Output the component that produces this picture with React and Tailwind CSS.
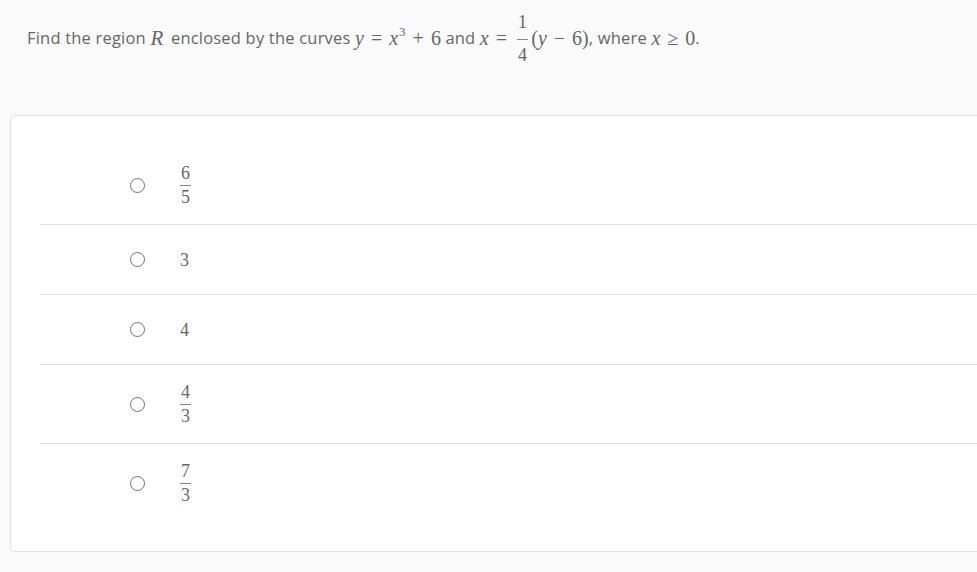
import React from 'react'

function Frac({ num, den, q }) {
  return (
    <span
      className={
        q
          ? "inline-flex flex-col items-center leading-none px-[3px] font-['Liberation_Serif','DejaVu_Serif',serif] text-[18px]"
          : "inline-flex flex-col items-center leading-none font-['Liberation_Serif','DejaVu_Serif',serif] text-[18px]"
      }
    >
      <span className={q ? 'px-[1px] pb-[8px]' : 'px-[1px] pb-[3px]'}>{num}</span>
      <span className="block h-px w-full bg-[#888]" />
      <span className={q ? 'px-[1px] pt-[6px]' : 'px-[1px] pt-[2px]'}>{den}</span>
    </span>
  )
}

function Op({ children }) {
  return <span className="px-[7px]">{children}</span>
}

function Radio() {
  return <span className="block w-[15px] h-[15px] rounded-full border-[1.5px] border-[#707070] bg-white shrink-0" />
}

const options = [
  { frac: ['6', '5'] },
  { text: '3' },
  { text: '4' },
  { frac: ['4', '3'] },
  { frac: ['7', '3'] },
]

export default function App() {
  return (
    <div className="w-[977px] h-[572px] overflow-hidden bg-[#fafafa] text-[#666] font-['Open_Sans','Lato',sans-serif]">
      <div className="h-[115px] pt-[12px] pl-[27px]">
        <div className="flex items-center h-[52px] whitespace-pre text-[16.5px] tracking-[0.2px]">
          <span>Find the region </span>
          <i className="font-['Liberation_Serif','DejaVu_Serif',serif] text-[21px] leading-none pr-[3px]">R</i>
          <span> enclosed by the curves </span>
          <span className="flex items-center font-['Liberation_Serif','DejaVu_Serif',serif] text-[20px] leading-none tracking-normal">
            <i>y</i>
            <Op>=</Op>
            <i>x</i>
            <sup className="text-[13px] pl-[1px]">3</sup>
            <Op>+</Op>
            <span>6</span>
          </span>
          <span> and </span>
          <span className="flex items-center font-['Liberation_Serif','DejaVu_Serif',serif] text-[20px] leading-none tracking-normal">
            <i>x</i>
            <Op>=</Op>
          </span>
          <Frac num="1" den="4" q />
          <span className="flex items-center font-['Liberation_Serif','DejaVu_Serif',serif] text-[20px] leading-none tracking-normal">
            <span>(</span>
            <i>y</i>
            <Op>−</Op>
            <span>6)</span>
          </span>
          <span>, where </span>
          <span className="flex items-center font-['Liberation_Serif','DejaVu_Serif',serif] text-[20px] leading-none tracking-normal">
            <i>x</i>
            <Op>≥</Op>
            <span>0</span>
          </span>
          <span>.</span>
        </div>
      </div>
      <div className="ml-[10px] w-[1000px] h-[437px] bg-white border border-[#e3e3e3] rounded-[4px] pt-[30px] pl-[29px]">
        {options.map((o, i) => (
          <div
            key={i}
            className={
              i < options.length - 1
                ? 'flex items-center py-[18px] border-b border-[#dcdcdc]'
                : 'flex items-center py-[18px]'
            }
          >
            <div className="w-[90px] shrink-0" />
            <Radio />
            <div className="w-[35px] shrink-0" />
            <div className="min-h-[33px] flex items-center">
              {o.frac ? (
                <Frac num={o.frac[0]} den={o.frac[1]} />
              ) : (
                <span className="font-['Liberation_Serif','DejaVu_Serif',serif] text-[18px] leading-none">
                  {o.text}
                </span>
              )}
            </div>
          </div>
        ))}
      </div>
    </div>
  )
}
